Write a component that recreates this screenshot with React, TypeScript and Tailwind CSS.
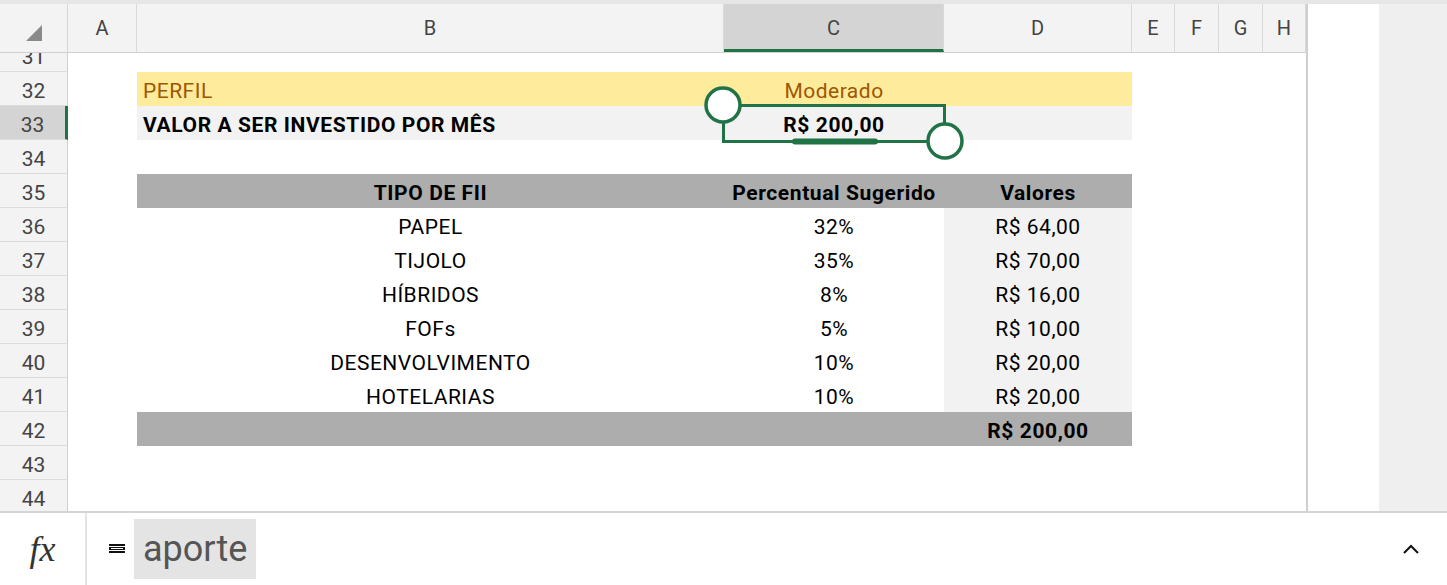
import React from "react";

const COLS = [
  { k: "A", w: 69 },
  { k: "B", w: 587 },
  { k: "C", w: 220 },
  { k: "D", w: 188 },
  { k: "E", w: 43 },
  { k: "F", w: 44 },
  { k: "G", w: 44 },
  { k: "H", w: 43 },
];

const rows = [
  ["PAPEL", "32%", "R$ 64,00"],
  ["TIJOLO", "35%", "R$ 70,00"],
  ["HÍBRIDOS", "8%", "R$ 16,00"],
  ["FOFs", "5%", "R$ 10,00"],
  ["DESENVOLVIMENTO", "10%", "R$ 20,00"],
  ["HOTELARIAS", "10%", "R$ 20,00"],
];

function RowNum({ n, sel }: { n: number; sel?: boolean }) {
  return (
    <div
      className={
        "w-[68px] shrink-0 h-full flex items-center justify-center pt-[6px] border-b border-[#dcdcdc] border-r text-[21px] text-[#444] " +
        (sel ? "bg-[#d4d4d4] border-r-[3px] border-r-[#217346]" : "bg-[#f3f3f3] border-r-[#cfcfcf]")
      }
    >
      {n}
    </div>
  );
}

function Row({ n, sel, children }: { n: number; sel?: boolean; children?: React.ReactNode }) {
  return (
    <div className="flex h-[34px] shrink-0">
      <RowNum n={n} sel={sel} />
      <div className="w-[69px] shrink-0" />
      {children}
    </div>
  );
}

const cell = "shrink-0 text-[21px] flex items-center pt-[6px] text-black";
const reg = " tracking-[0.5px]";
const bold = " font-bold tracking-[0.6px]";

export default function App() {
  return (
    <div className="w-[1447px] h-[585px] overflow-hidden bg-white flex flex-col" style={{ fontFamily: "Roboto, 'Liberation Sans', sans-serif" }}>
      <div className="h-[511px] flex border-t-[4px] border-t-[#e6e6e6] shrink-0">
        <div className="w-[1306px] flex flex-col relative overflow-hidden">
          {/* column header */}
          <div className="flex h-[49px] shrink-0 bg-[#f3f3f3] border-b border-[#d0d0d0]">
            <div className="w-[68px] border-r border-[#d6d6d6] flex items-end justify-center pb-[10px]">
              <svg width="18" height="18" viewBox="0 0 18 18">
                <polygon points="17,1 17,17 1,17" fill="#8a8a8a" />
              </svg>
            </div>
            {COLS.map((c) => (
              <div
                key={c.k}
                style={{ width: c.w }}
                className={
                  "shrink-0 flex items-center justify-center text-[20px] text-[#444] border-r border-[#d9d9d9] " +
                  (c.k === "C" ? "bg-[#d4d4d4] border-b-[3px] border-b-[#217346] pt-[3px]" : "")
                }
              >
                {c.k}
              </div>
            ))}
          </div>
          {/* body */}
          <div className="flex-1 overflow-hidden flex flex-col">
            <div className="mt-[-15px]">
              <Row n={31} />
            </div>
            <Row n={32}>
              <div className={"w-[587px] bg-[#ffeb9c] !text-[#9c5700] pl-[6px]" + " " + cell + reg}>PERFIL</div>
              <div className={"w-[220px] bg-[#ffeb9c] !text-[#9c5700] justify-center" + " " + cell + reg}>Moderado</div>
              <div className="w-[188px] shrink-0 bg-[#ffeb9c]" />
            </Row>
            <Row n={33} sel>
              <div className={"w-[587px] bg-[#f2f2f2] pl-[6px] " + cell + bold}>VALOR A SER INVESTIDO POR MÊS</div>
              <div className={"w-[220px] bg-[#f2f2f2] justify-center " + cell + bold}>R$ 200,00</div>
              <div className="w-[188px] shrink-0 bg-[#f2f2f2]" />
            </Row>
            <Row n={34} />
            <Row n={35}>
              <div className={"w-[587px] bg-[#adadad] justify-center " + cell + bold}>TIPO DE FII</div>
              <div className={"w-[220px] bg-[#adadad] justify-center " + cell + bold}>Percentual Sugerido</div>
              <div className={"w-[188px] bg-[#adadad] justify-center " + cell + bold}>Valores</div>
            </Row>
            {rows.map((r, i) => (
              <Row n={36 + i} key={i}>
                <div className={"w-[587px] justify-center " + cell + reg}>{r[0]}</div>
                <div className={"w-[220px] justify-center " + cell + reg}>{r[1]}</div>
                <div className={"w-[188px] bg-[#f2f2f2] justify-center " + cell + reg}>{r[2]}</div>
              </Row>
            ))}
            <Row n={42}>
              <div className="w-[587px] shrink-0 bg-[#adadad]" />
              <div className="w-[220px] shrink-0 bg-[#adadad]" />
              <div className={"w-[188px] bg-[#adadad] justify-center " + cell + bold}>R$ 200,00</div>
            </Row>
            <Row n={43} />
            <Row n={44} />
          </div>
          {/* selection overlay */}
          <svg className="absolute left-0 top-0 pointer-events-none" width="1306" height="507">
            <rect x="723.5" y="101.5" width="221" height="36" fill="none" stroke="#217346" strokeWidth="3" />
            <rect x="792" y="134.5" width="86" height="6" rx="3" fill="#217346" />
            <circle cx="723" cy="101" r="17" fill="white" stroke="#217346" strokeWidth="3.5" />
            <circle cx="945" cy="137" r="17" fill="white" stroke="#217346" strokeWidth="3.5" />
          </svg>
        </div>
        <div className="w-[2px] bg-[#cfcfcf] shrink-0" />
        <div className="w-[71px] shrink-0 bg-white" />
        <div className="flex-1 bg-[#efefef]" />
      </div>
      {/* formula bar */}
      <div className="flex-1 flex border-t-[2px] border-[#d4d4d4] bg-white">
        <div className="w-[87px] shrink-0 border-r-[2px] border-[#e4e4e4] flex items-center justify-center">
          <span className="text-[36px] italic text-[#333]" style={{ fontFamily: "'Liberation Serif', serif" }}>fx</span>
        </div>
        <div className="flex items-center pl-[21px]">
          <svg width="18" height="10" viewBox="0 0 18 10">
            <rect x="1" y="0" width="16" height="2" fill="#111" />
            <rect x="1" y="3" width="16" height="3" fill="#111" />
            <rect x="3" y="4" width="12" height="1" fill="#fff" />
            <rect x="1" y="7" width="16" height="2" fill="#111" />
          </svg>
          <div className="ml-[8px] h-[60px] px-[9px] bg-[#e4e4e4] flex items-center text-[36px] text-[#555]">aporte</div>
        </div>
        <div className="flex-1" />
        <div className="w-[70px] flex items-center justify-center pr-[2px]">
          <svg width="20" height="12" viewBox="0 0 20 12">
            <polyline points="3,10 10,3 17,10" fill="none" stroke="#111" strokeWidth="2" />
          </svg>
        </div>
      </div>
    </div>
  );
}
